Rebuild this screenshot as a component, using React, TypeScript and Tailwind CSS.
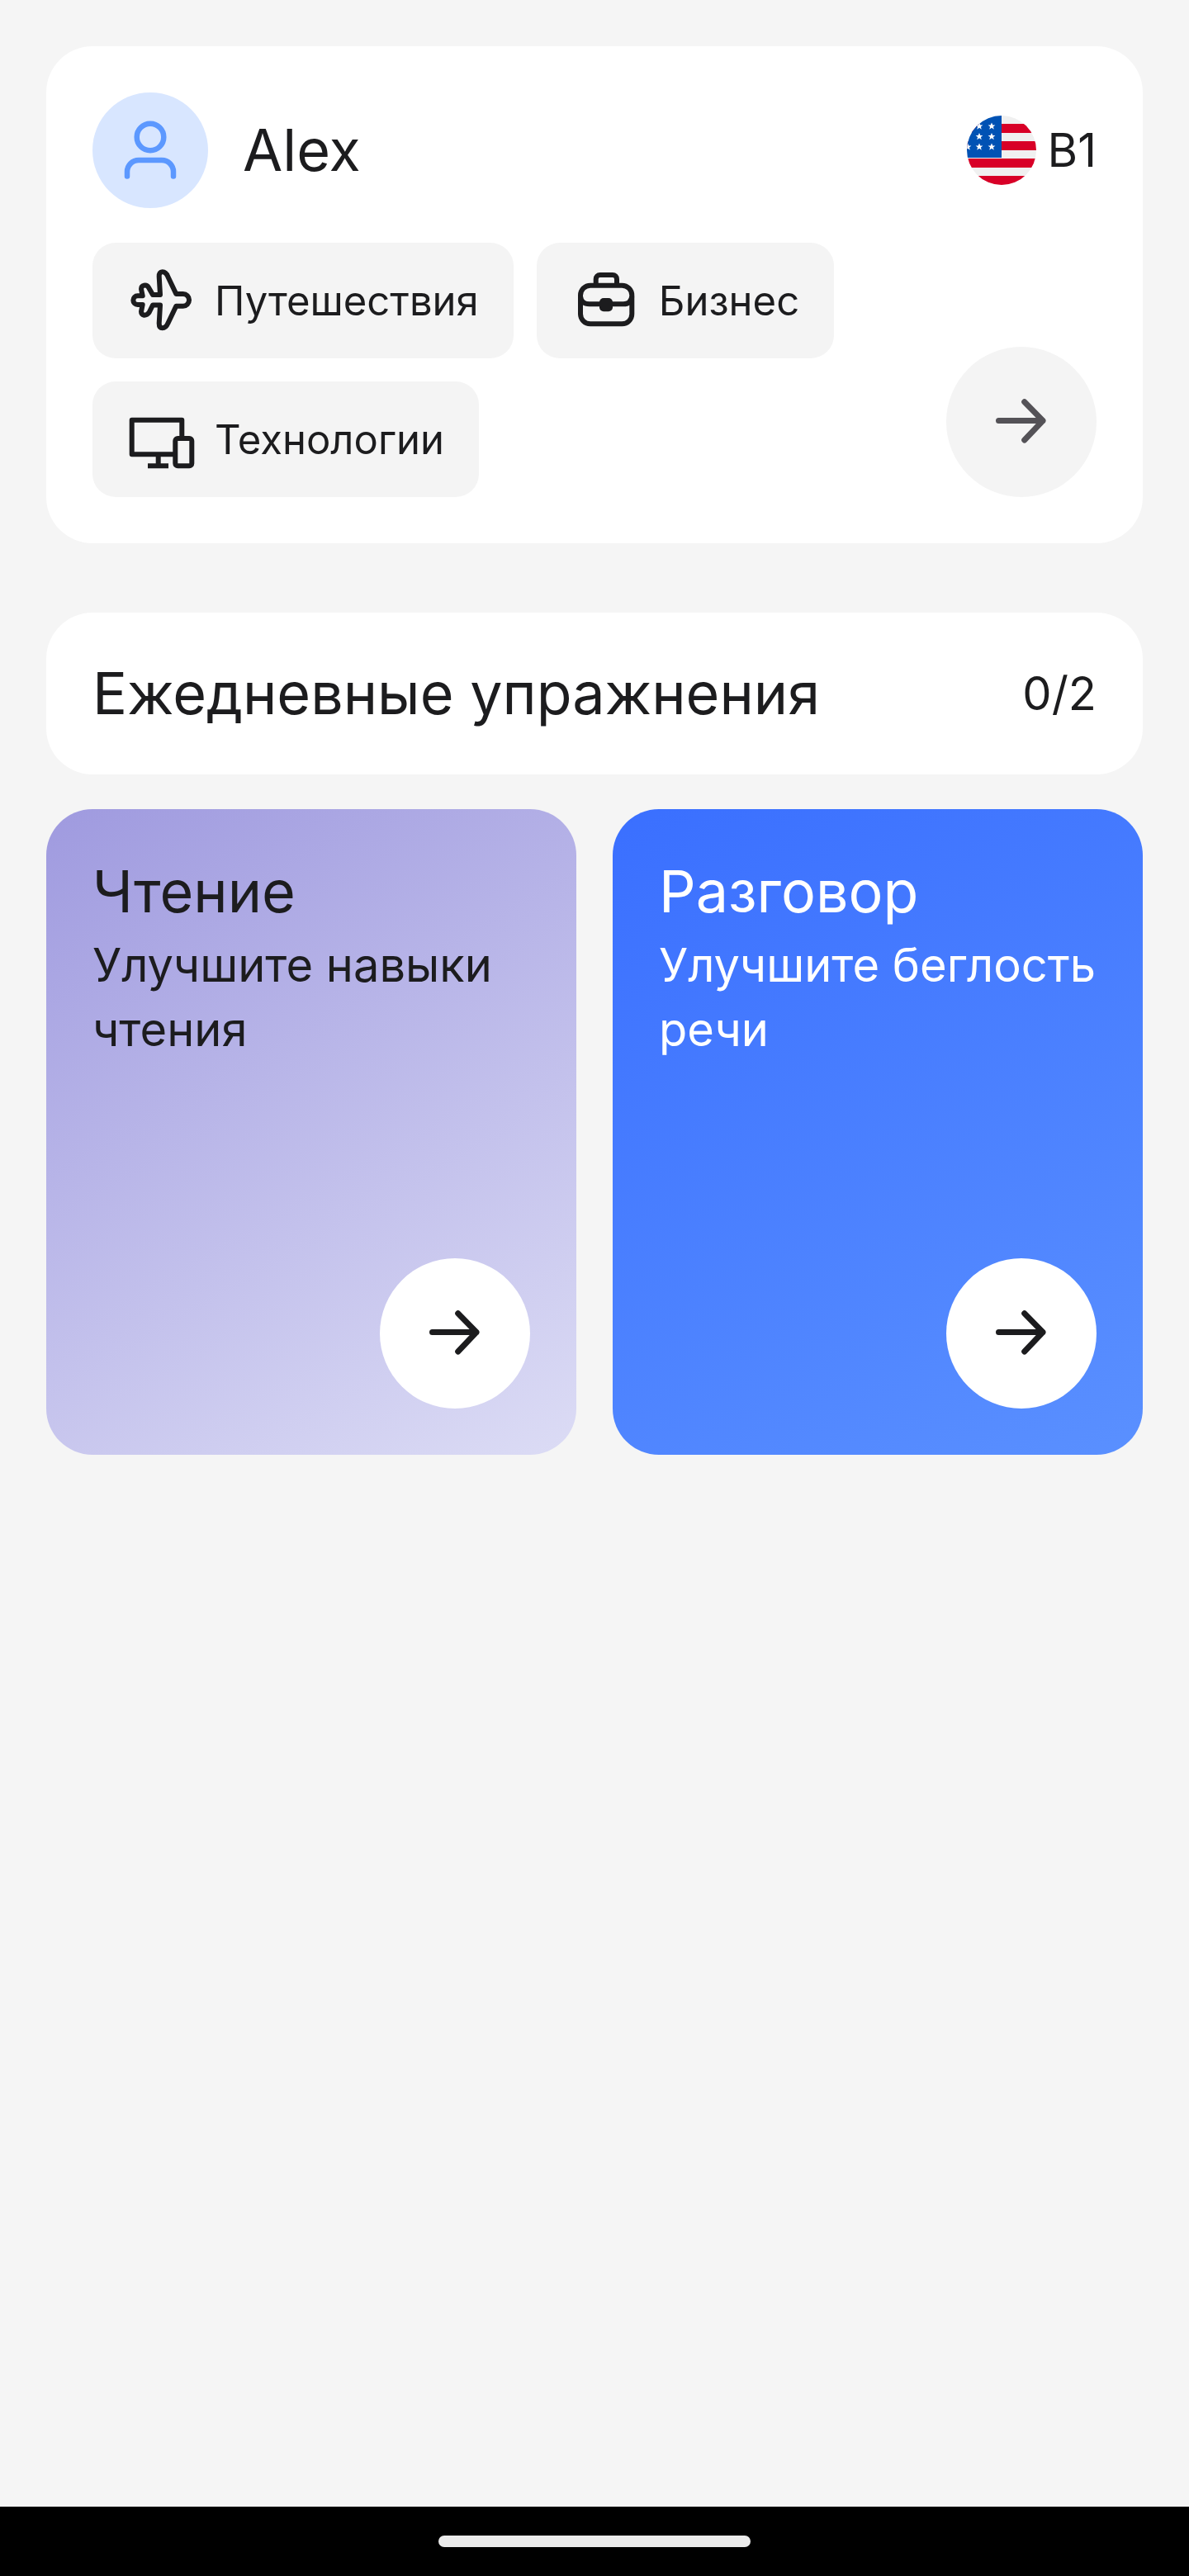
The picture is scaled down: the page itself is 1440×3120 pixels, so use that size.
import React from 'react';

const Star = ({ x, y }: { x: number; y: number }) => (
  <path
    transform={`translate(${x} ${y}) scale(4.6)`}
    d="M0 -1 L0.29 -0.31 L0.95 -0.31 L0.42 0.12 L0.59 0.81 L0 0.4 L-0.59 0.81 L-0.42 0.12 L-0.95 -0.31 L-0.29 -0.31 Z"
    fill="#fff"
  />
);

function UsFlag() {
  return (
    <svg width="84" height="84" viewBox="0 0 84 84" className="shrink-0">
      <defs>
        <clipPath id="flag-circle">
          <circle cx="42" cy="42" r="42" />
        </clipPath>
      </defs>
      <g clipPath="url(#flag-circle)">
        <rect width="84" height="84" fill="#f0f0f0" />
        <rect y="10" width="84" height="11" fill="#d80027" />
        <rect y="31" width="84" height="11" fill="#d80027" />
        <rect y="52" width="84" height="11" fill="#d80027" />
        <rect y="73" width="84" height="11" fill="#d80027" />
        <rect width="42" height="51" fill="#0052b4" />
        <Star x={15} y={13} />
        <Star x={30} y={13} />
        <Star x={15} y={25.5} />
        <Star x={30} y={25.5} />
        <Star x={1} y={38} />
        <Star x={15} y={38} />
        <Star x={30} y={38} />
      </g>
    </svg>
  );
}

function ArrowIcon({ color }: { color: string }) {
  return (
    <svg width="80" height="80" viewBox="0 0 80 80" fill="none" stroke={color} strokeWidth="7" strokeLinecap="round" strokeLinejoin="round">
      <path d="M12.5 38.5 H66 M43.7 15.7 L66 38.5 L43.7 62" />
    </svg>
  );
}

function UserIcon() {
  return (
    <svg width="72" height="72" viewBox="0 0 72 72" fill="none" stroke="#5c98ff" strokeWidth="6.5" strokeLinecap="round">
      <circle cx="36" cy="20" r="16.3" />
      <path d="M8 67.5 V62 A14 14 0 0 1 22 48 H50 A14 14 0 0 1 64 62 V67.5" />
    </svg>
  );
}

function PlaneIcon() {
  return (
    <svg width="80" height="80" viewBox="0 0 80 80" fill="none" stroke="#1c1c1e" strokeWidth="6" strokeLinejoin="round" className="shrink-0">
      <path d="M65.7 32 H57.3 L47.3 11 Q45 5.3 40.7 5.3 Q36.5 5.3 36.7 11 L38 33 H29 L24 24.3 Q22 21 18.5 21.7 Q15 22.5 15 26 L16.7 34.3 H10.7 A5.35 5.35 0 0 0 10.7 45 H16.7 L15 53.3 Q15 57 18.5 57.7 Q22 58 24.7 54.3 L29 45.5 H38 L36.7 67.7 Q36.7 73.3 40.7 73.3 Q45 73.3 47.3 67.7 L57.3 46.7 H65.7 A7.35 7.35 0 0 0 65.7 32 Z" />
    </svg>
  );
}

function BriefcaseIcon() {
  return (
    <svg width="80" height="80" viewBox="0 0 80 80" fill="none" stroke="#1c1c1e" strokeWidth="6" className="shrink-0">
      <rect x="9" y="21.7" width="62.3" height="46.6" rx="12" />
      <path d="M27.7 21.7 V14 A5 5 0 0 1 32.7 9 H48 A5 5 0 0 1 53 14 V21.7" />
      <path d="M9 35 Q10 44.3 20 44.3 H61 Q70 44.3 71.3 35" />
      <rect x="32" y="37" width="16" height="16.3" rx="5" fill="#1c1c1e" stroke="none" />
    </svg>
  );
}

function DevicesIcon() {
  return (
    <svg width="80" height="80" viewBox="0 0 80 80" fill="none" stroke="#1c1c1e" strokeWidth="6" strokeLinejoin="round" className="shrink-0">
      <path d="M64.3 39 V16.7 H3.7 V58.3 H56.3" />
      <rect x="56.3" y="39" width="20" height="33.3" rx="3" />
      <path d="M35.7 58.3 V72.3 M23 72.3 H48" />
    </svg>
  );
}

function Chip({ icon, label }: { icon: React.ReactNode; label: string }) {
  return (
    <div className="flex h-[140px] items-center gap-[24px] rounded-[28px] bg-[#f4f4f4] pl-[44px] pr-[42px]">
      {icon}
      <span className="text-[49px] leading-none text-[#1c1c1e]">{label}</span>
    </div>
  );
}

export default function App() {
  return (
    <div className="flex h-[3120px] w-[1440px] flex-col bg-[#f5f5f5] font-['Inter',sans-serif]">
      <main className="flex flex-1 flex-col px-[56px] pt-[56px]">
        {/* Profile */}
        <section className="rounded-[56px] bg-white p-[56px]">
          <div className="flex items-center justify-between">
            <div className="flex items-center gap-[42px]">
              <div className="flex h-[140px] w-[140px] items-center justify-center rounded-full bg-[#d8e6ff]">
                <UserIcon />
              </div>
              <span className="text-[70px] leading-none text-[#1c1c1e]">Alex</span>
            </div>
            <div className="flex items-center gap-[14px]">
              <UsFlag />
              <span className="text-[56px] leading-none text-[#1c1c1e]">B1</span>
            </div>
          </div>
          <div className="mt-[42px] flex items-end justify-between">
            <div className="flex w-[960px] flex-wrap gap-[28px]">
              <Chip icon={<PlaneIcon />} label="Путешествия" />
              <Chip icon={<BriefcaseIcon />} label="Бизнес" />
              <Chip icon={<DevicesIcon />} label="Технологии" />
            </div>
            <div className="flex h-[182px] w-[182px] items-center justify-center rounded-full bg-[#f4f4f4]">
              <ArrowIcon color="#545257" />
            </div>
          </div>
        </section>

        {/* Daily exercises */}
        <section className="mt-[84px] flex h-[196px] items-center justify-between rounded-[56px] bg-white px-[56px]">
          <h2 className="text-[70px] font-normal leading-none text-[#1c1c1e]">Ежедневные упражнения</h2>
          <span className="text-[56px] leading-none text-[#1c1c1e]">0/2</span>
        </section>

        <div className="mt-[42px] grid grid-cols-2 gap-[44px]">
          <article className="flex h-[782px] flex-col justify-between rounded-[56px] bg-[linear-gradient(150deg,#9f9adf,#dcdcf5)] p-[56px] text-[#1c1c1e]">
            <div>
              <h3 className="text-[70px] font-normal leading-[88px]">Чтение</h3>
              <p className="mt-[6px] text-[56px] leading-[78px]">Улучшите навыки чтения</p>
            </div>
            <div className="flex h-[182px] w-[182px] items-center justify-center self-end rounded-full bg-white">
              <ArrowIcon color="#1c1c1e" />
            </div>
          </article>
          <article className="flex h-[782px] flex-col justify-between rounded-[56px] bg-[linear-gradient(150deg,#3a6fff,#5a90ff)] p-[56px] text-white">
            <div>
              <h3 className="text-[70px] font-normal leading-[88px]">Разговор</h3>
              <p className="mt-[6px] text-[56px] leading-[78px]">Улучшите беглость речи</p>
            </div>
            <div className="flex h-[182px] w-[182px] items-center justify-center self-end rounded-full bg-white">
              <ArrowIcon color="#1c1c1e" />
            </div>
          </article>
        </div>
      </main>

      {/* System nav bar */}
      <footer className="flex h-[84px] items-start justify-center bg-black pt-[35px]">
        <div className="h-[14px] w-[378px] rounded-full bg-[#ebebeb]" />
      </footer>
    </div>
  );
}
